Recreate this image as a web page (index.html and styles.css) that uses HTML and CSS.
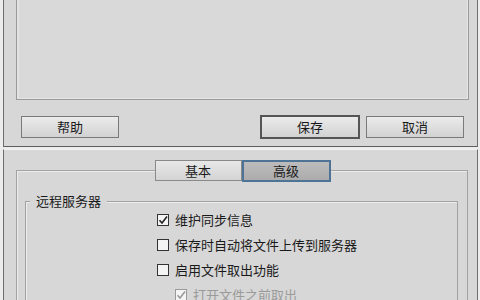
FILE: index.html
```html
<!DOCTYPE html>
<html lang="zh-CN">
<head>
<meta charset="utf-8">
<link rel="stylesheet" href="styles.css">
</head>
<body>
<div class="panel top">
  <div class="listbox"></div>
  <div class="btnrow">
    <button class="btn help">帮助</button>
    <div class="spacer"></div>
    <button class="btn default">保存</button>
    <button class="btn">取消</button>
  </div>
</div>
<div class="panel bottom">
  <div class="tabgroup">
    <div class="tabs">
      <div class="tab">基本</div>
      <div class="tab active">高级</div>
    </div>
    <div class="group">
      <div class="legend">远程服务器</div>
      <div class="rows">
        <div class="row"><span class="cb"><svg viewBox="0 0 12 12" width="12" height="12"><path d="M2.5 6.2 L5 9 L10 2.5" fill="none" stroke="#222" stroke-width="1.6"/></svg></span>维护同步信息</div>
        <div class="row"><span class="cb"></span>保存时自动将文件上传到服务器</div>
        <div class="row"><span class="cb"></span>启用文件取出功能</div>
        <div class="row sub disabled"><span class="cb"><svg viewBox="0 0 12 12" width="12" height="12"><path d="M2.5 6.2 L5 9 L10 2.5" fill="none" stroke="#9a9a9a" stroke-width="1.6"/></svg></span>打开文件之前取出</div>
      </div>
    </div>
  </div>
</div>
</body>
</html>
```
FILE: styles.css
```css
* { box-sizing: border-box; }
html, body { margin: 0; padding: 0; }
body {
  width: 480px;
  height: 300px;
  overflow: hidden;
  background: #ececec;
  font-family: "Noto Sans CJK SC", "Noto Sans", sans-serif;
  font-size: 13px;
  line-height: 18px;
  color: #1a1a1a;
}
.panel {
  margin: 0 2px 0 3px;
  background: #d7d7d7;
  border-left: 1px solid #6e6e6e;
  border-right: 1px solid #6e6e6e;
}
.top {
  height: 147px;
  border-bottom: 1px solid #5e5e5e;
  padding: 0 8px 0 12px;
  display: flex;
  flex-direction: column;
}
.listbox {
  height: 100px;
  border: 1px solid #9a9a9a;
  border-top: none;
  background: #d9d9d9;
  box-shadow: inset 2px 0 0 #e2e2e2, inset -1px -1px 0 #e6e6e6;
}
.btnrow {
  display: flex;
  align-items: center;
  margin-top: 15px;
  padding: 0 5px 0 5px;
}
.spacer { flex: 1; }
.btn {
  font-family: inherit;
  font-size: 13px;
  color: #1a1a1a;
  height: 22px;
  width: 98px;
  padding: 0;
  border: 1px solid #7a7a7a;
  background: linear-gradient(#ebebeb, #d2d2d2);
  line-height: 20px;
}
.btn.default {
  width: 100px;
  height: 24px;
  border: 2px solid #555;
  margin-right: 6px;
}
.bottom {
  margin-top: 2px;
  height: 151px;
  overflow: hidden;
  border-top: 1px solid #f2f2f2;
  padding: 20px 9px 0 12px;
}
.tabgroup {
  border: 1px solid #a2a2a2;
  box-shadow: inset 1px 1px 0 #ececec;
  height: 140px;
}
.tabs {
  display: flex;
  justify-content: center;
  margin-top: -11px;
  padding-left: 1px;
}
.tab {
  width: 87px;
  height: 21px;
  line-height: 19px;
  text-align: center;
  border: 1px solid #8a8a8a;
  background: linear-gradient(#e8e8e8, #d4d4d4);
}
.tab.active {
  width: 89px;
  height: 22px;
  border: 2px solid #4d7396;
  background: linear-gradient(#bcbcbc, #acacac);
  line-height: 18px;
}
.group {
  margin: 19px 9px 0 8px;
  border: 1px solid #a2a2a2;
  border-bottom: none;
  box-shadow: inset 1px 1px 0 #ececec;
  height: 120px;
}
.legend {
  display: block;
  width: fit-content;
  margin: -10px 0 0 4px;
  padding: 0 6px;
  background: #d7d7d7;
  line-height: 18px;
}
.rows {
  padding: 0 0 0 131px;
  margin-top: -3px;
}
.row {
  display: flex;
  align-items: center;
  height: 25px;
  white-space: nowrap;
}
.row.sub { padding-left: 18px; }
.row.disabled { color: #9a9a9a; }
.cb {
  width: 12px;
  height: 12px;
  border: 1px solid #333;
  background: #f4f4f4;
  margin-right: 6px;
  display: flex;
  align-items: center;
  justify-content: center;
}
.cb svg { display: block; margin: -1px; }
.row.disabled .cb { border-color: #9a9a9a; }
```
